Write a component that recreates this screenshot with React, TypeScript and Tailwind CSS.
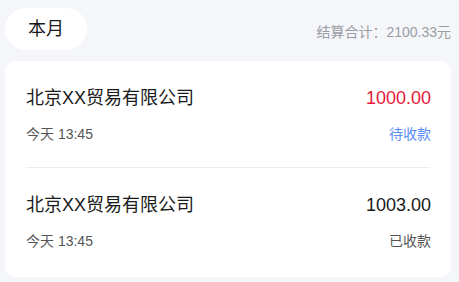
import React from "react";

const records = [
  { name: "北京XX贸易有限公司", amount: "1000.00", time: "今天 13:45", status: "待收款", pending: true },
  { name: "北京XX贸易有限公司", amount: "1003.00", time: "今天 13:45", status: "已收款", pending: false },
];

export default function App() {
  return (
    <div
      className="min-h-screen w-[459px] bg-[#f5f6fa] pl-[5px] pr-[8px] pt-[8px]"
      style={{ fontFamily: '"Liberation Sans", "Noto Sans CJK SC", sans-serif' }}
    >
      {/* Header */}
      <div className="flex items-center justify-between">
        <div className="flex h-[42px] w-[82px] items-center justify-center rounded-full bg-white text-[18px] text-[#1a1a1a]">
          本月
        </div>
        <div className="mt-[6px] text-[14px] text-[#9a9ca3]">结算合计：2100.33元</div>
      </div>

      {/* List */}
      <div className="mt-[11px] rounded-[10px] bg-white">
        {records.map((r, i) => (
          <div key={i}>
            {i > 0 && <div className="mx-[21px] h-px bg-[#ececec]" />}
            <div className={`pl-[21px] pr-[20px] pt-[24px] ${i === records.length - 1 ? "pb-[26px]" : "pb-[23px]"}`}>
              <div className="flex items-center justify-between leading-[26px]">
                <span className="text-[18px] text-[#1a1a1a]">{r.name}</span>
                <span className={`text-[18px] ${r.pending ? "text-[#e5173a]" : "text-[#1a1a1a]"}`}>
                  {r.amount}
                </span>
              </div>
              <div className="mt-[13px] flex items-center justify-between leading-[20px]">
                <span className="text-[14px] text-[#555]">{r.time}</span>
                <span className={`text-[14px] ${r.pending ? "text-[#5b8cf5]" : "text-[#555]"}`}>
                  {r.status}
                </span>
              </div>
            </div>
          </div>
        ))}
      </div>
    </div>
  );
}
